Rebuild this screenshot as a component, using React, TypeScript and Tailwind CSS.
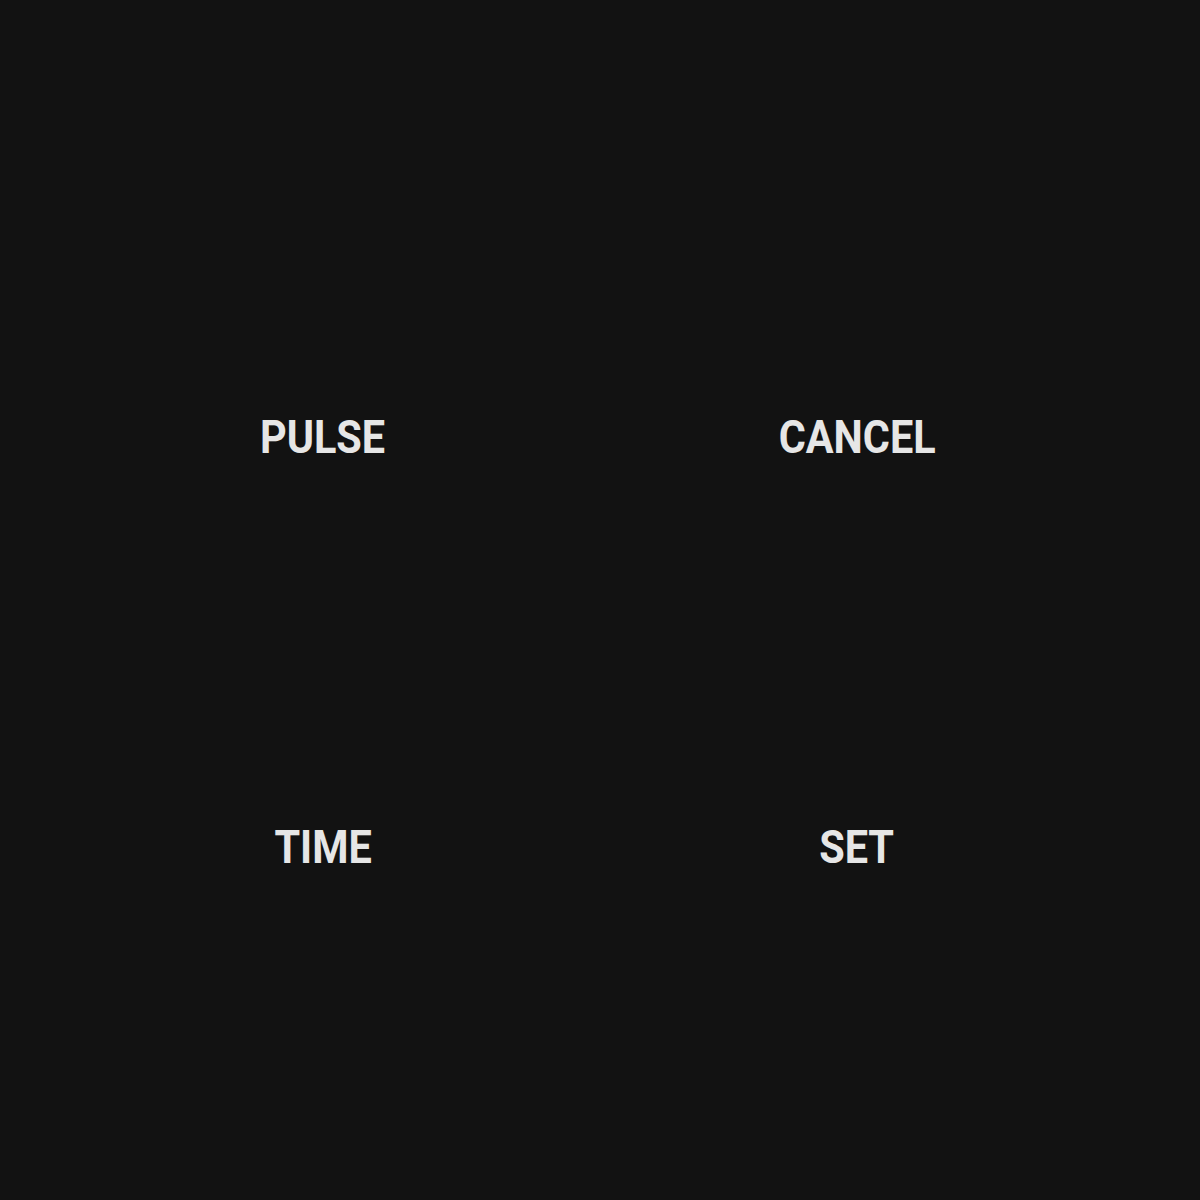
import React from 'react';

const keys = ['PULSE', 'CANCEL', 'TIME', 'SET'];

const App: React.FC = () => {
    return (
        <div className="w-full h-[1200px] bg-[#121212] pl-[56px] pt-[232px]">
            <div className="grid grid-cols-[534px_534px] grid-rows-[410px_410px]">
                {keys.map(label => (
                    <button
                        key={label}
                        className="flex items-center justify-center text-[#e6e6e6] text-[46px] font-bold leading-none"
                        style={{ fontFamily: 'Roboto, "Liberation Sans", sans-serif' }}
                    >
                        {/* condensed look, no Roboto Condensed installed */}
                        <span className="inline-block scale-x-[0.9]">{label}</span>
                    </button>
                ))}
            </div>
        </div>
    );
};

export default App;
